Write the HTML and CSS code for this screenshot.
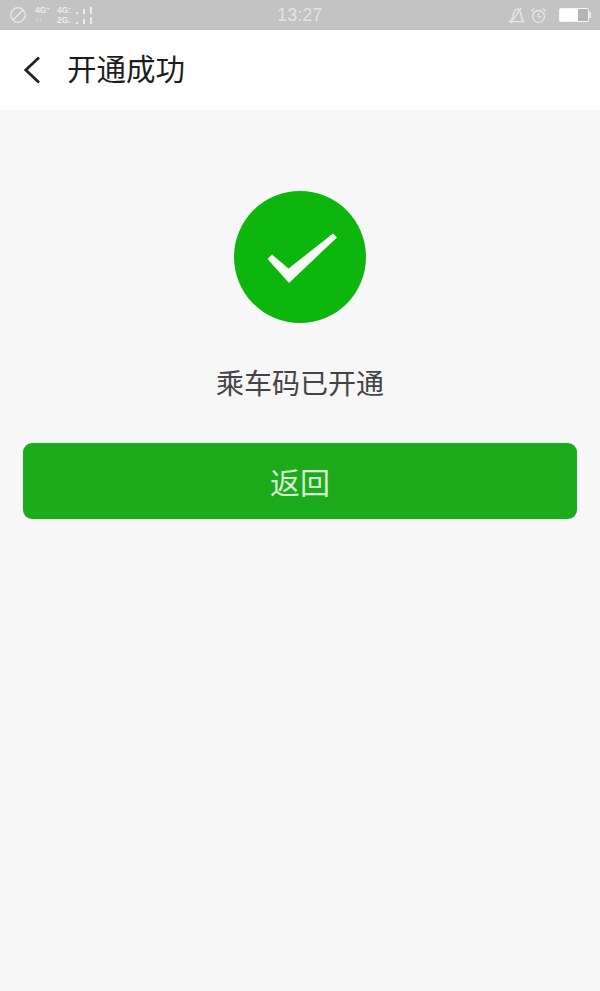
FILE: index.html
```html
<!DOCTYPE html>
<html lang="zh-CN">
<head>
<meta charset="utf-8">
<title>开通成功</title>
<link rel="stylesheet" href="styles.css">
</head>
<body>
<div class="status">
  <div class="status-left">
    <svg class="dnd" viewBox="0 0 18 18"><circle cx="9" cy="9" r="7.2"/><path d="M4 14 14 4"/></svg>
    <div class="signal">
      <div class="sig-col sig-first">
        <div class="sig-row">4G<sup class="plus">+</sup></div>
        <div class="sig-row arrows">↑↓</div>
      </div>
      <div class="sig-col">
        <div class="sig-row">4G:<i class="bar b1"></i><i class="bar b2"></i><i class="bar b3"></i></div>
        <div class="sig-row">2G.<i class="bar b1"></i><i class="bar b2"></i><i class="bar b3"></i></div>
      </div>
    </div>
  </div>
  <div class="time">13:27</div>
  <div class="status-right">
    <svg class="bell" viewBox="0 0 18 18"><path d="M1.500 15.500H16.500L14.500 11C13.500 8 14 3.500 10.500 2C7 2 6 6 5.500 9C5 12 3.500 14 1.500 15.500ZM3 17 14 1"/></svg>
    <svg class="clock" viewBox="0 0 18 18"><circle cx="9" cy="10" r="6.300"/><path d="M9 6.500V10.500H12M1.500 4.500 4.500 1.500M16.500 4.500 13.500 1.500"/></svg>
    <div class="battery"><div class="battery-fill"></div><div class="battery-empty"></div></div>
    <div class="battery-tip"></div>
  </div>
</div>
<header class="nav">
  <svg class="back" viewBox="0 0 20 30"><path d="M17 2.500 3.800 15 17 27.500"/></svg>
  <h1 class="title">开通成功</h1>
</header>
<main class="content">
  <svg class="success" viewBox="0 0 132 132">
    <circle cx="66" cy="66" r="66"/>
    <path d="M33.500 68 38 63.500 54.500 77.500 99 42.500 103 46.500 55 92Z"/>
  </svg>
  <p class="message">乘车码已开通</p>
  <button class="return">返回</button>
</main>
</body>
</html>
```
FILE: styles.css
```css
* { box-sizing: border-box; }
html, body { margin: 0; height: 100%; }
body {
  width: 600px;
  height: 991px;
  overflow: hidden;
  display: flex;
  flex-direction: column;
  background: #f7f7f7;
  font-family: "Noto Sans CJK SC", "Liberation Sans", sans-serif;
}
.status {
  flex: none;
  height: 30px;
  background: #c3c3c3;
  color: #efefef;
  display: grid;
  grid-template-columns: 1fr auto 1fr;
  align-items: center;
  padding: 0 9px;
}
.status-left { display: flex; align-items: center; gap: 8px; }
.dnd { width: 18px; height: 18px; fill: none; stroke: #e8e8e8; stroke-width: 1.4; }
.signal { display: flex; gap: 4px; font: bold 8.500px/10px "Liberation Sans", sans-serif; color: #ececec; }
.sig-col { display: flex; flex-direction: column; }
.sig-first { width: 18px; }
.sig-row { display: flex; align-items: center; height: 10px; white-space: nowrap; }
.plus { font-size: 6px; line-height: 6px; align-self: flex-start; }
.arrows { font-size: 7px; }
.bar { display: block; width: 2px; margin-left: 5px; background: #ececec; align-self: flex-end; margin-bottom: 1px; }
.b1 { height: 2px; margin-left: 5px; }
.b2 { height: 5px; }
.b3 { height: 7px; }
.time { padding-top: 2px; font: 17.500px/1 "Liberation Sans", sans-serif; color: #e4e4e4; letter-spacing: .3px; }
.status-right { display: flex; align-items: center; justify-content: flex-end; }
.bell, .clock { width: 17px; height: 17px; fill: none; stroke: #e8e8e8; stroke-width: 1.4; }
.bell { margin-right: 5px; }
.clock { margin-right: 12px; }
.battery { display: flex; width: 30px; height: 14px; padding: 1px; background: #f4f4f4; border-radius: 2px; }
.battery-fill { width: 18px; background: #fff; }
.battery-empty { flex: 1; background: #b4b4b4; }
.battery-tip { width: 2px; height: 6px; background: #e8e8e8; }
.nav {
  flex: none;
  height: 80px;
  background: #fff;
  display: flex;
  align-items: center;
  padding: 0 0 0 22px;
}
.back { width: 20px; height: 30px; fill: none; stroke: #222; stroke-width: 2.800; }
.title { margin: 0 0 4px 25px; font-size: 29.500px; font-weight: 400; color: #1d1d1d; line-height: 1; }
.content {
  flex: 1;
  display: flex;
  flex-direction: column;
  align-items: center;
  padding: 81px 23px 0;
}
.success { width: 132px; height: 132px; display: block; }
.success circle { fill: #0cb60c; }
.success path { fill: #f6fbf6; }
.message { margin: 43px 0 0; font-size: 28px; line-height: 32px; color: #444; }
.return {
  width: 100%;
  height: 76px;
  margin-top: 45px;
  padding: 0 0 1px;
  border: 0;
  border-radius: 9px;
  background: #1bab1b;
  color: #d6efd6;
  font-family: inherit;
  font-size: 30px;
}
```
